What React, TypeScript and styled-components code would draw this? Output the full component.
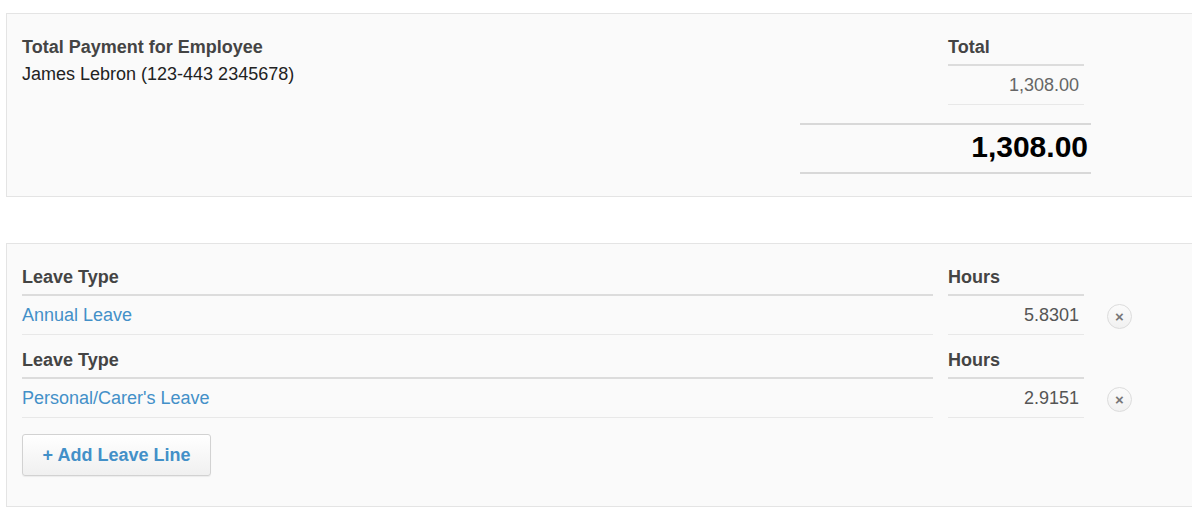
import React from "react";
import styled, { createGlobalStyle } from "styled-components";

const Global = createGlobalStyle`
  html, body { margin: 0; padding: 0; background: #ffffff; }
  body { font-family: "Liberation Sans", Arial, sans-serif; font-size: 18px; color: #333; }
`;

const Page = styled.div`
  display: flex;
  flex-direction: column;
  gap: 46px;
  padding: 13px 0 0 6px;
  width: 1186px;
`;

const Panel = styled.section<{ $pr: number; $pt: number; $pb: number }>`
  background: #fafafa;
  border: 1px solid #e4e4e4;
  border-right: none;
  padding: ${(p) => p.$pt}px ${(p) => p.$pr}px ${(p) => p.$pb}px 15px;
`;

const SummaryRow = styled.div`
  display: flex;
  justify-content: space-between;
  align-items: flex-start;
`;

const Info = styled.div`
  display: flex;
  flex-direction: column;
  gap: 7px;
  line-height: 20px;
`;

const Title = styled.div`
  font-weight: bold;
  color: #444;
`;

const Name = styled.div`
  color: #222;
`;

const Totals = styled.div`
  width: 291px;
  display: flex;
  flex-direction: column;
`;

const TotalColumn = styled.div`
  margin-left: 148px;
  width: 136px;
  margin-bottom: 18px;
`;

const ColHead = styled.div<{ $pt?: number }>`
  font-weight: bold;
  color: #444;
  line-height: 20px;
  padding: ${(p) => p.$pt ?? 0}px 0 7px;
  border-bottom: 2px solid #dcdcdc;
`;

const Cell = styled.div<{ $align?: string; $color?: string }>`
  line-height: 20px;
  padding: 9px 5px 9px 0;
  border-bottom: 1px solid #e8e8e8;
  text-align: ${(p) => p.$align ?? "left"};
  color: ${(p) => p.$color ?? "#555"};
`;

const GrandTotal = styled.div`
  border-top: 2px solid #d8d8d8;
  border-bottom: 2px solid #d8d8d8;
  padding: 5px 3px 8px 0;
  text-align: right;
  font-size: 30px;
  line-height: 34px;
  font-weight: bold;
  color: #000;
`;

const LeaveGrid = styled.div`
  display: grid;
  grid-template-columns: 1fr 136px 48px;
  column-gap: 15px;
  align-items: stretch;
`;

const LinkText = styled.a`
  color: #4390c8;
  text-decoration: none;
  cursor: pointer;
`;

const RemoveCell = styled.div`
  display: flex;
  align-items: flex-end;
  padding-bottom: 6px;
`;

const RemoveButton = styled.button`
  width: 25px;
  height: 25px;
  margin-left: 8px;
  border-radius: 50%;
  border: 1px solid #dcdcdc;
  background: linear-gradient(#fbfbfb, #f1f1f1);
  color: #777;
  font-family: "Liberation Sans", Arial, sans-serif;
  font-size: 15px;
  font-weight: bold;
  line-height: 1;
  padding: 0;
  display: flex;
  align-items: center;
  justify-content: center;
  cursor: pointer;
`;

const Empty = styled.div``;

const AddButton = styled.button`
  margin-top: 16px;
  width: 189px;
  height: 42px;
  border: 1px solid #d2d2d2;
  border-radius: 3px;
  background: linear-gradient(#ffffff, #f0f0f0);
  box-shadow: 0 1px 1px rgba(0, 0, 0, 0.06);
  color: #4390c8;
  font-family: "Liberation Sans", Arial, sans-serif;
  font-size: 18px;
  font-weight: bold;
  cursor: pointer;
  padding: 0;
`;

const leaves = [
  { type: "Annual Leave", hours: "5.8301" },
  { type: "Personal/Carer's Leave", hours: "2.9151" },
];

export default function App() {
  return (
    <>
      <Global />
      <Page>
        <Panel $pr={101} $pt={23} $pb={22}>
          <SummaryRow>
            <Info>
              <Title>Total Payment for Employee</Title>
              <Name>James Lebron (123-443 2345678)</Name>
            </Info>
            <Totals>
              <TotalColumn>
                <ColHead>Total</ColHead>
                <Cell $align="right" $color="#666">1,308.00</Cell>
              </TotalColumn>
              <GrandTotal>1,308.00</GrandTotal>
            </Totals>
          </SummaryRow>
        </Panel>
        <Panel $pr={45} $pt={8} $pb={30}>
          <LeaveGrid>
            {leaves.map((l, i) => (
              <React.Fragment key={i}>
                <ColHead $pt={15}>Leave Type</ColHead>
                <ColHead $pt={15}>Hours</ColHead>
                <Empty />
                <Cell>
                  <LinkText>{l.type}</LinkText>
                </Cell>
                <Cell $align="right">{l.hours}</Cell>
                <RemoveCell>
                  <RemoveButton aria-label="Remove">×</RemoveButton>
                </RemoveCell>
              </React.Fragment>
            ))}
          </LeaveGrid>
          <AddButton>+ Add Leave Line</AddButton>
        </Panel>
      </Page>
    </>
  );
}
